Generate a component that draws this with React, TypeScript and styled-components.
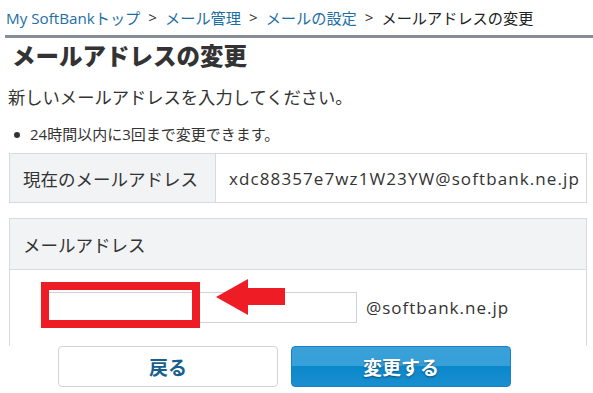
import React from 'react';
import styled, { createGlobalStyle } from 'styled-components';

const GlobalStyle = createGlobalStyle`
  html, body {
    margin: 0;
    padding: 0;
    background: #fff;
    overflow: hidden;
  }
  body {
    font-family: "Open Sans", "Noto Sans CJK JP", sans-serif;
    color: #333;
  }
`;

const Page = styled.div`
  width: 593px;
  height: 393px;
  overflow: hidden;
`;

const Breadcrumb = styled.nav`
  display: flex;
  align-items: center;
  height: 33px;
  padding-left: 6px;
  font-size: 15.2px;
  white-space: nowrap;
`;

const Crumb = styled.a`
  color: #1d6ea5;
  text-decoration: none;
`;

const Sep = styled.span`
  margin: 0 8px;
  color: #333;
`;

const Current = styled.span`
  color: #222;
`;

const Rule = styled.div`
  height: 3px;
  margin: 2px 0 0 5px;
  background: #878d94;
`;

const Title = styled.h1`
  margin: 0;
  padding: 1px 0 0 12px;
  height: 34px;
  font-size: 23.5px;
  font-weight: 900;
  line-height: 34px;
  color: #333;
`;

const Lead = styled.p`
  margin: 13px 0 0 8px;
  font-size: 17.3px;
  line-height: 24px;
`;

const Notes = styled.ul`
  margin: 13px 0 0 0;
  padding: 0 0 0 30px;
  font-size: 15px;
  line-height: 22px;
  list-style: none;
`;

const Note = styled.li`
  position: relative;
  &::before {
    content: '';
    position: absolute;
    left: -16px;
    top: 9px;
    width: 6px;
    height: 6px;
    border-radius: 50%;
    background: #333;
  }
`;

const InfoTable = styled.div`
  display: grid;
  grid-template-columns: 206px 1fr;
  margin: 8px 6px 0 9px;
  border: 1px solid #d9dadc;
  height: 48px;
`;

const HeadCell = styled.div`
  display: flex;
  align-items: center;
  padding-left: 13px;
  background: #f2f3f5;
  border-right: 1px solid #d9dadc;
  font-size: 17.5px;
  font-family: "Noto Sans CJK JP", sans-serif;
`;

const ValueCell = styled.div`
  display: flex;
  align-items: center;
  padding-left: 13px;
  font-size: 17px;
  letter-spacing: 1.1px;
  white-space: nowrap;
`;

const FormBox = styled.div`
  margin: 15px 6px 0 9px;
  border: 1px solid #d9dadc;
  border-bottom: none;
`;

const FormHead = styled.div`
  display: flex;
  align-items: center;
  height: 50px;
  padding-left: 13px;
  background: #f2f3f5;
  border-bottom: 1px solid #d9dadc;
  font-size: 17.5px;
  font-family: "Noto Sans CJK JP", sans-serif;
`;

const FormBody = styled.div`
  display: flex;
  align-items: flex-start;
  height: 80px;
  padding: 22px 0 0 38px;
  box-sizing: border-box;
`;

const InputWrap = styled.div`
  position: relative;
  width: 309px;
  height: 31px;
`;

const TextInput = styled.input`
  box-sizing: border-box;
  width: 100%;
  height: 100%;
  border: 1px solid #cfd1d4;
  background: #fff;
  outline: none;
`;

const Highlight = styled.div`
  position: absolute;
  left: -7px;
  top: -10px;
  width: 143px;
  height: 30px;
  border: 8px solid #ee1c25;
  pointer-events: none;
`;

const Arrow = styled.svg`
  position: absolute;
  left: 168px;
  top: -13px;
  pointer-events: none;
`;

const Domain = styled.span`
  margin-left: 9px;
  font-size: 17px;
  letter-spacing: 1px;
  line-height: 31px;
`;

const Footer = styled.div`
  position: fixed;
  left: 0;
  right: 0;
  bottom: 0;
  height: 47px;
  display: flex;
  gap: 13px;
  padding-left: 58px;
  background: #fff;
  font-family: "Noto Sans CJK JP", sans-serif;
`;

const Button = styled.button<{ $primary?: boolean }>`
  width: 220px;
  height: 41px;
  border-radius: 4px;
  font-family: inherit;
  font-size: 19px;
  font-weight: 700;
  cursor: pointer;
  border: 1px solid ${({ $primary }) => ($primary ? '#1b80c4' : '#cfd1d4')};
  color: ${({ $primary }) => ($primary ? '#fff' : '#1a5e8e')};
  background: ${({ $primary }) =>
    $primary ? 'linear-gradient(#3aa0d8 0%, #36a0d8 50%, #0a88cb 50%, #1a8ecf 100%)' : '#fff'};
  text-shadow: ${({ $primary }) => ($primary ? '0 1px 2px rgba(0,0,0,0.45)' : 'none')};
`;

const App: React.FC = () => {
  return (
    <Page>
      <GlobalStyle />
      <Breadcrumb>
        <Crumb href="#">My SoftBankトップ</Crumb>
        <Sep>&gt;</Sep>
        <Crumb href="#">メール管理</Crumb>
        <Sep>&gt;</Sep>
        <Crumb href="#">メールの設定</Crumb>
        <Sep>&gt;</Sep>
        <Current>メールアドレスの変更</Current>
      </Breadcrumb>
      <Rule />
      <Title>メールアドレスの変更</Title>
      <Lead>新しいメールアドレスを入力してください。</Lead>
      <Notes>
        <Note>24時間以内に3回まで変更できます。</Note>
      </Notes>
      <InfoTable>
        <HeadCell>現在のメールアドレス</HeadCell>
        <ValueCell>xdc88357e7wz1W23YW@softbank.ne.jp</ValueCell>
      </InfoTable>
      <FormBox>
        <FormHead>メールアドレス</FormHead>
        <FormBody>
          <InputWrap>
            <TextInput type="text" />
            <Highlight />
            <Arrow width="70" height="37" viewBox="0 0 70 37">
              <polygon points="0,18 32,0 32,9 69,9 69,26 32,26 32,36" fill="#ee1c25" />
            </Arrow>
          </InputWrap>
          <Domain>@softbank.ne.jp</Domain>
        </FormBody>
      </FormBox>
      <Footer>
        <Button>戻る</Button>
        <Button $primary>変更する</Button>
      </Footer>
    </Page>
  );
};

export default App;
